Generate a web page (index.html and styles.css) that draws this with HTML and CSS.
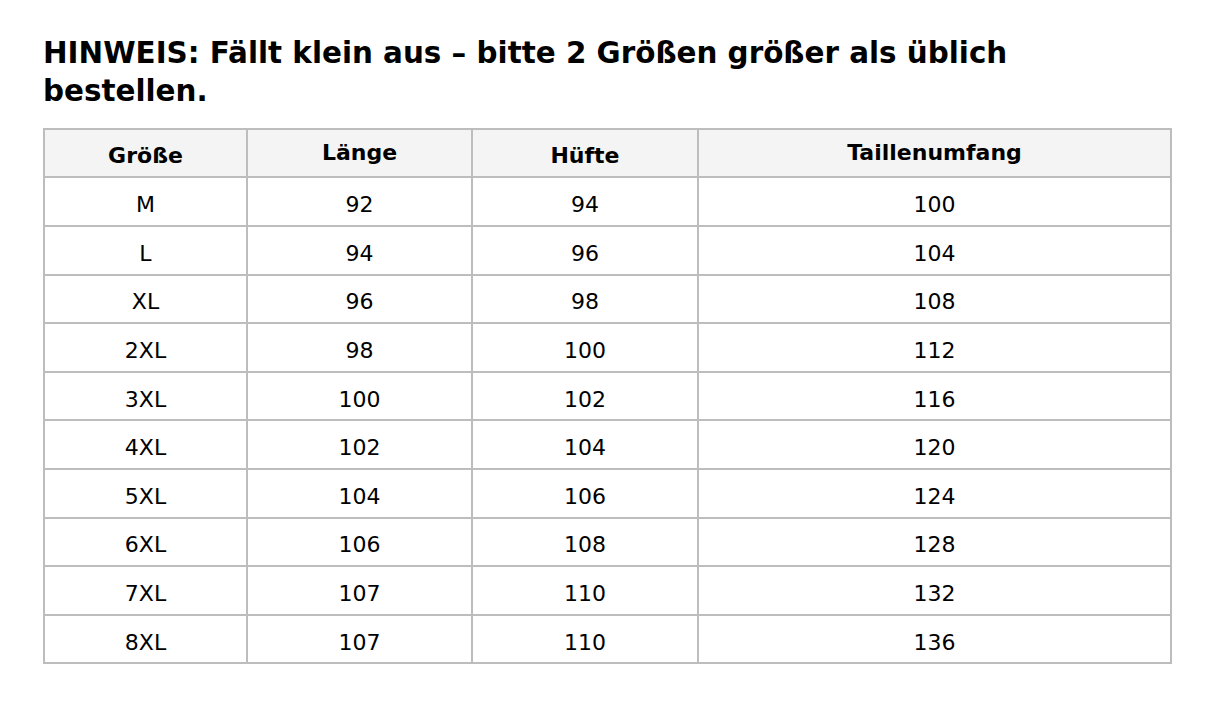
FILE: index.html
```html
<!DOCTYPE html>
<html lang="de">
<head>
<meta charset="utf-8">
<link rel="stylesheet" href="styles.css">
</head>
<body>
<div class="page">
  <h1 class="note">HINWEIS: Fällt klein aus – bitte 2 Größen größer als üblich bestellen.</h1>
  <table class="size-table">
    <colgroup>
      <col class="c1"><col class="c2"><col class="c3"><col class="c4">
    </colgroup>
    <thead>
      <tr><th class="low">Größe</th><th>Länge</th><th class="low">Hüfte</th><th>Taillenumfang</th></tr>
    </thead>
    <tbody>
      <tr><td>M</td><td>92</td><td>94</td><td>100</td></tr>
      <tr><td>L</td><td>94</td><td>96</td><td>104</td></tr>
      <tr><td>XL</td><td>96</td><td>98</td><td>108</td></tr>
      <tr><td>2XL</td><td>98</td><td>100</td><td>112</td></tr>
      <tr><td>3XL</td><td>100</td><td>102</td><td>116</td></tr>
      <tr><td>4XL</td><td>102</td><td>104</td><td>120</td></tr>
      <tr><td>5XL</td><td>104</td><td>106</td><td>124</td></tr>
      <tr><td>6XL</td><td>106</td><td>108</td><td>128</td></tr>
      <tr><td>7XL</td><td>107</td><td>110</td><td>132</td></tr>
      <tr><td>8XL</td><td>107</td><td>110</td><td>136</td></tr>
    </tbody>
  </table>
</div>
</body>
</html>
```
FILE: styles.css
```css
html, body {
  margin: 0;
  padding: 0;
  background: #ffffff;
}
.page {
  padding: 34px 42px 20px 43px;
  font-family: "DejaVu Sans", sans-serif;
  color: #000;
}
.note {
  margin: 0 0 18px 0;
  font-size: 29.4px;
  line-height: 38.2px;
  font-weight: bold;
}
.size-table {
  width: 1129px;
  border-collapse: collapse;
  table-layout: fixed;
  font-size: 22px;
}
.c1 { width: 203px; }
.c2 { width: 225px; }
.c3 { width: 226px; }
.size-table th,
.size-table td {
  border: 2px solid #bdbdbd;
  text-align: center;
  vertical-align: middle;
  line-height: 25px;
}
.size-table td {
  height: 48.6px;
  padding: 6px 0 0 0;
  box-sizing: border-box;
}
.size-table th {
  background: #f4f4f4;
  font-weight: bold;
  height: 48px;
  padding: 0 0 2px 0;
  box-sizing: border-box;
}
.size-table th.low {
  padding: 5px 0 0 0;
}
```
